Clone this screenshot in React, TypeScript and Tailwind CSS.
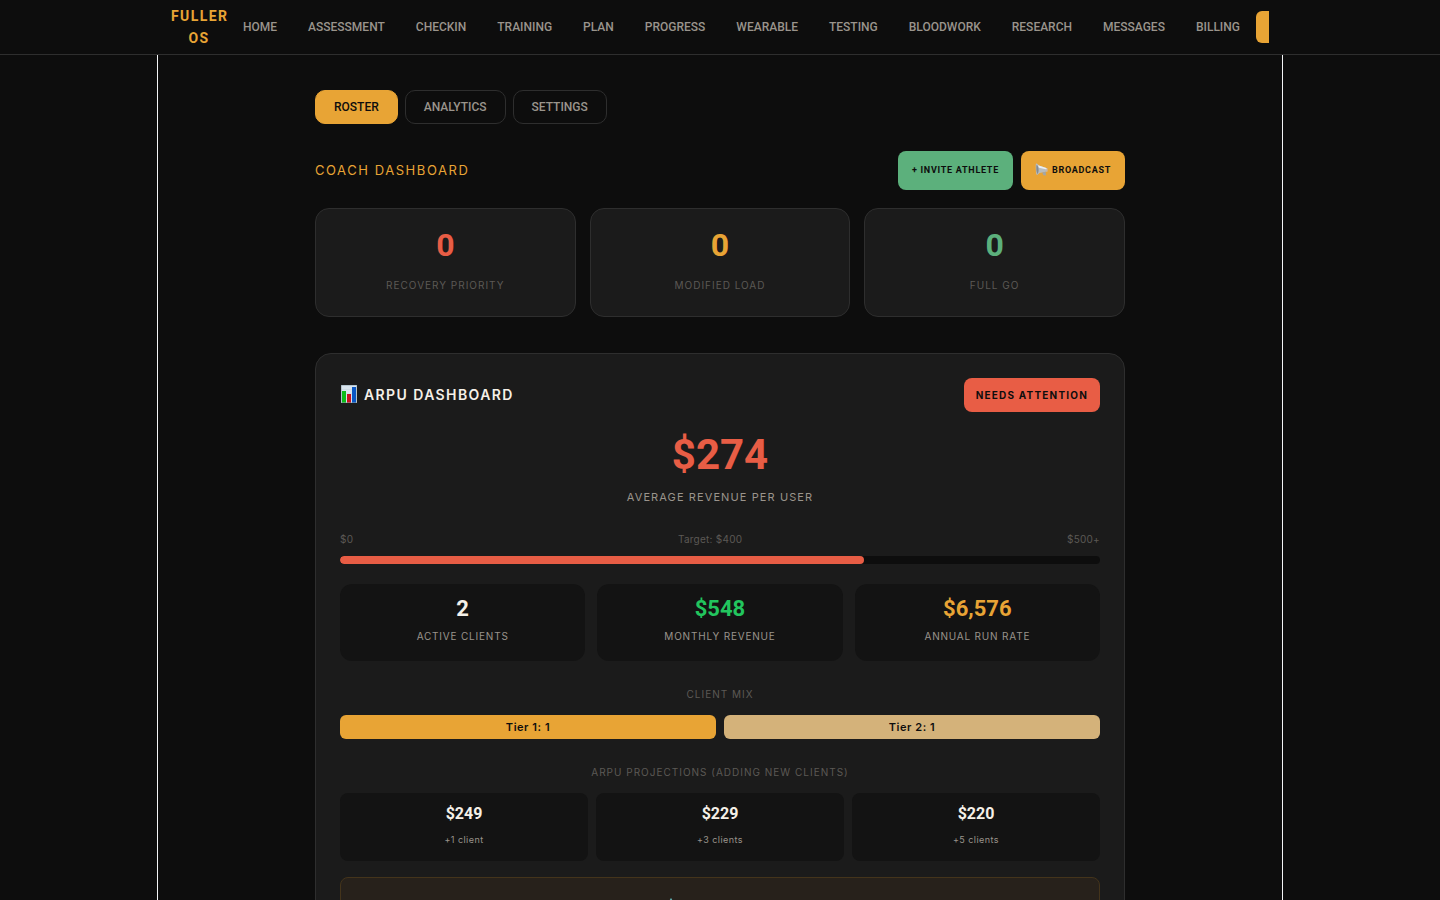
const NAV_ITEMS = [
  "Home",
  "Assessment",
  "Checkin",
  "Training",
  "Plan",
  "Progress",
  "Wearable",
  "Testing",
  "Bloodwork",
  "Research",
  "Messages",
  "Billing",
];

const TABS = ["Roster", "Analytics", "Settings"];

const READINESS = [
  { value: "0", label: "Recovery Priority", color: "text-[#e85d45]" },
  { value: "0", label: "Modified Load", color: "text-[#e8a435]" },
  { value: "0", label: "Full Go", color: "text-[#5cb07c]" },
];

const REVENUE = [
  { value: "2", label: "Active Clients", color: "text-[#f5f0e8]" },
  { value: "$548", label: "Monthly Revenue", color: "text-[#22c55e]" },
  { value: "$6,576", label: "Annual Run Rate", color: "text-[#e8a435]" },
];

const PROJECTIONS = [
  { value: "$249", label: "+1 client" },
  { value: "$229", label: "+3 clients" },
  { value: "$220", label: "+5 clients" },
];

function ChartIcon() {
  return (
    <svg viewBox="0 0 17 20" className="h-5 w-[17px] shrink-0" aria-hidden="true">
      <rect x="1" width="16" height="18" fill="#d9e5ee" />
      <path d="M1 4.5h16M1 9h16M1 13.5h16" stroke="#c3d3de" strokeWidth="0.5" />
      <rect x="2" y="6" width="4" height="12" fill="#0dbb18" />
      <rect x="7" y="9" width="4" height="9" fill="#c8101e" />
      <rect x="12" y="2" width="4" height="16" fill="#0b57c4" />
      <rect x="1.25" y="0.25" width="15.5" height="17.5" fill="none" stroke="#90a4ae" strokeWidth="0.5" />
    </svg>
  );
}

function MegaphoneIcon() {
  return (
    <svg viewBox="0 0 13 15" className="h-[15px] w-[13px] shrink-0" aria-hidden="true">
      <path d="M1.2 .6C2.2 .3 3 1.6 4 2.5L12.2 5.2 12.2 8.6 4.5 10 2.2 12C1.2 12 .9 9 .8 6 .7 3 .6 1 1.2 .6Z" fill="#b9bdbf" />
      <path d="M1.6 1.8C3.8 3.5 4.4 8.5 2.4 11.2 1.2 9 1 4 1.6 1.8Z" fill="#858b90" />
      <path d="M3 2.2 12 5.2V6.4L4 4.8Z" fill="#eceff1" />
      <path d="M7.2 9.5 8.4 12.2 11 12.6 10.6 8.8Z" fill="#a3a6a8" />
      <path d="M11.3 5.2 12.6 5.6V8.4L11.3 8.6Z" fill="#d2b7a0" />
    </svg>
  );
}

function GemIcon() {
  return (
    <svg viewBox="0 0 12 16" className="h-4 w-3" aria-hidden="true">
      <path d="M6 0 11 8 6 16 1 8Z" fill="#4f9ea0" />
      <path d="M6 0 8 8 6 16 4 8Z" fill="#7cc4c4" />
    </svg>
  );
}

function Navbar() {
  return (
    <nav className="border-b border-[#2e2e2e] px-3">
      <div className="mx-auto flex h-[54px] max-w-[1098px] items-center gap-px overflow-hidden font-['Roboto',sans-serif]">
        <a
          href="#home"
          className="w-14 shrink-0 text-center text-sm leading-[22px] font-bold tracking-widest text-[#e8a435]"
        >
          FULLER OS
        </a>
        {NAV_ITEMS.map((item) => (
          <a
            key={item}
            href={`#${item.toLowerCase()}`}
            className="shrink-0 px-[15px] text-xs font-medium text-[#9a948c] uppercase"
          >
            {item}
          </a>
        ))}
        <button
          aria-label="Account"
          className="h-8 w-24 shrink-0 rounded-md bg-[#e8a435]"
        />
      </div>
    </nav>
  );
}

function Readiness() {
  return (
    <div className="mt-[18px] grid grid-cols-3 gap-3.5">
      {READINESS.map((card) => (
        <div
          key={card.label}
          className="rounded-[14px] border border-[#2e2e2e] bg-[#1b1b1b] pt-[18px] pb-5 text-center"
        >
          <div className={`font-['Roboto',sans-serif] text-[32px] leading-9 font-bold ${card.color}`}>
            {card.value}
          </div>
          <div className="mt-3 text-[10px] leading-[21px] tracking-widest text-[#5c5955] uppercase">
            {card.label}
          </div>
        </div>
      ))}
    </div>
  );
}

function ArpuDashboard() {
  return (
    <section className="mt-9 rounded-2xl border border-[#2e2e2e] bg-[#1b1b1b] p-6">
      <div className="flex items-center justify-between">
        <h2 className="flex items-center gap-[7px] text-sm font-semibold tracking-widest text-[#f5f0e8]">
          <ChartIcon />
          ARPU DASHBOARD
        </h2>
        <span className="rounded-lg bg-[#e85d45] px-3 text-[10px] leading-[34px] font-bold tracking-[0.12em] text-[#0d0d0d]">
          NEEDS ATTENTION
        </span>
      </div>

      <div className="mt-4 text-center">
        <div className="font-['Roboto',sans-serif] text-[42px] leading-[54px] font-bold text-[#e85d45]">$274</div>
        <div className="mt-1 text-[11px] leading-[22px] tracking-widest text-[#9a948c]">
          AVERAGE REVENUE PER USER
        </div>
      </div>

      <div className="mt-[22px] flex justify-between text-[10px] leading-[18px] tracking-wide text-[#5c5955]">
        <span>$0</span>
        <span>Target: $400</span>
        <span>$500+</span>
      </div>
      <div className="mt-2 h-2 overflow-hidden rounded bg-[#0d0d0d]">
        <div className="h-full w-[69%] rounded bg-[#e85d45]" />
      </div>

      <div className="mt-5 grid grid-cols-3 gap-3">
        {REVENUE.map((stat) => (
          <div key={stat.label} className="rounded-xl bg-[#131313] pt-2.5 pb-3.5 text-center">
            <div className={`font-['Roboto',sans-serif] text-[22px] leading-[30px] font-bold ${stat.color}`}>
              {stat.value}
            </div>
            <div className="mt-0.5 text-[10px] leading-[21px] tracking-[0.08em] text-[#9a948c] uppercase">
              {stat.label}
            </div>
          </div>
        ))}
      </div>

      <h3 className="mt-6 text-center text-[10px] leading-[18px] tracking-widest text-[#5c5955]">CLIENT MIX</h3>
      <div className="mt-3 grid grid-cols-2 gap-2 text-center text-[11px] leading-6 font-semibold tracking-wider text-[#0d0d0d]">
        <div className="rounded-md bg-[#e8a435]">Tier 1: 1</div>
        <div className="rounded-md bg-[#d4b27a]">Tier 2: 1</div>
      </div>

      <h3 className="mt-6 text-center text-[10px] leading-[18px] tracking-widest text-[#5c5955]">
        ARPU PROJECTIONS (ADDING NEW CLIENTS)
      </h3>
      <div className="mt-3 grid grid-cols-3 gap-2">
        {PROJECTIONS.map((item) => (
          <div key={item.label} className="rounded-lg bg-[#131313] py-2.5 text-center">
            <div className="font-['Roboto',sans-serif] text-base leading-[22px] font-bold text-[#f5f0e8]">
              {item.value}
            </div>
            <div className="mt-1.5 pb-0.5 text-[9px] leading-[18px] tracking-wider text-[#9a948c]">{item.label}</div>
          </div>
        ))}
      </div>

      <div className="mt-4 rounded-lg border border-[#44341b] bg-[#27211b] py-5">
        <div className="mx-auto w-[110px]">
          <GemIcon />
        </div>
      </div>
    </section>
  );
}

export default function App() {
  return (
    <div className="flex h-screen flex-col overflow-hidden bg-[#0d0d0d] font-['Inter',sans-serif]">
      <Navbar />
      <div className="mx-auto min-h-0 w-full max-w-[1126px] flex-1 border-x border-[#f3f4f6]">
        <main className="mx-auto max-w-[810px] pt-[35px]">
          <div className="flex gap-[7px]">
            {TABS.map((tab) => (
              <button
                key={tab}
                className={`h-[34px] rounded-[10px] border px-[18px] font-['Roboto',sans-serif] text-xs font-medium uppercase ${
                  tab === "Roster"
                    ? "border-[#e8a435] bg-[#e8a435] text-[#0d0d0d]"
                    : "border-[#2e2e2e] text-[#9a948c]"
                }`}
              >
                {tab}
              </button>
            ))}
          </div>

          <div className="mt-[27px] flex items-center justify-between">
            <h1 className="text-[13px] tracking-[0.12em] text-[#e8a435]">COACH DASHBOARD</h1>
            <div className="flex gap-2 font-['Roboto',sans-serif] text-[9px] font-bold tracking-[0.08em] text-[#0d0d0d]">
              <button className="h-[39px] rounded-lg bg-[#5cb07c] px-3.5">+ INVITE ATHLETE</button>
              <button className="flex h-[39px] items-center gap-1 rounded-lg bg-[#e8a435] px-3.5">
                <MegaphoneIcon />
                BROADCAST
              </button>
            </div>
          </div>

          <Readiness />
          <ArpuDashboard />
        </main>
      </div>
    </div>
  );
}
